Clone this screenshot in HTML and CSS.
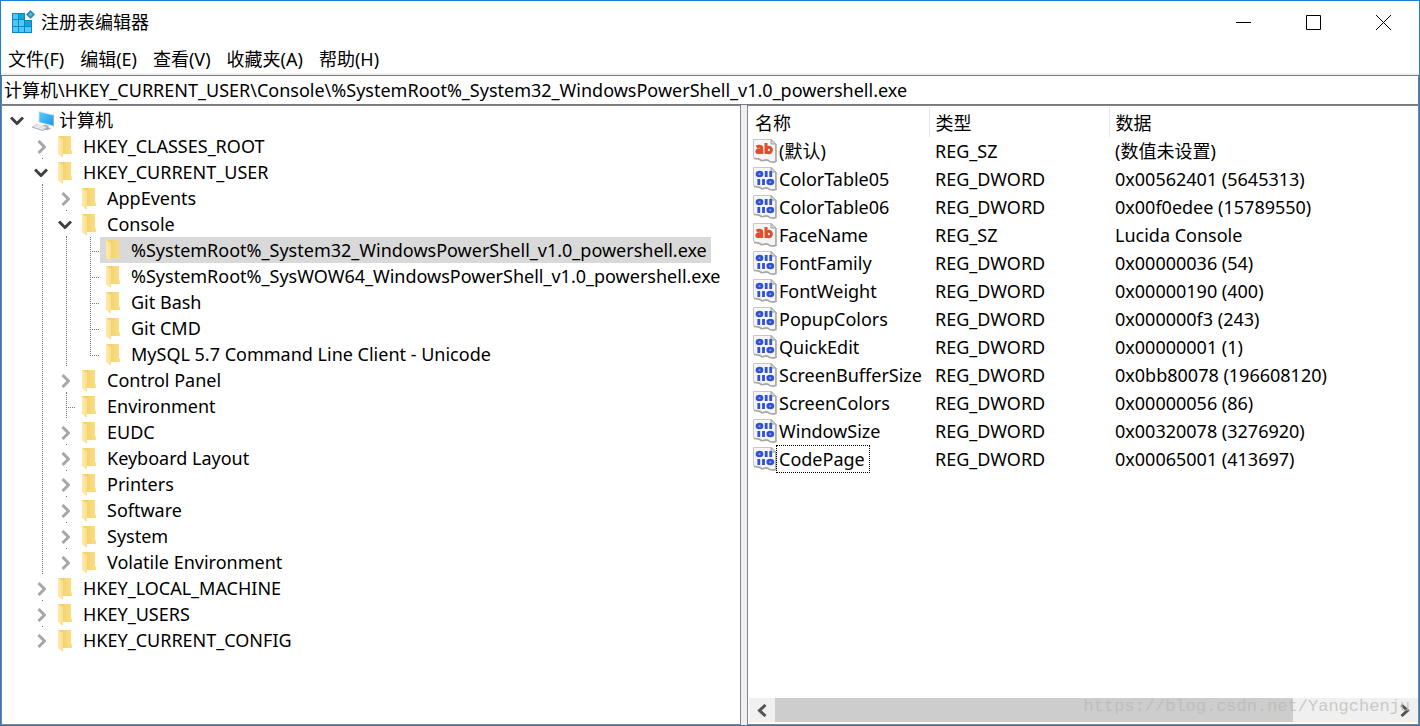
FILE: index.html
```html
<!DOCTYPE html>
<html lang="zh-CN">
<head>
<meta charset="utf-8">
<title>注册表编辑器</title>
<link rel="stylesheet" href="styles.css">
</head>
<body>
<svg class="defs" aria-hidden="true">
  <defs>
    <linearGradient id="foldBack" x1="0" x2="1"><stop offset="0" stop-color="#f1cb62"/><stop offset="1" stop-color="#fadf86"/></linearGradient>
    <linearGradient id="foldFront" x1="0" x2="1"><stop offset="0" stop-color="#ffe9a8"/><stop offset="1" stop-color="#fbe092"/></linearGradient>
    <linearGradient id="screen" x1="0" y1="0" x2="1" y2="1"><stop offset="0" stop-color="#62c8fb"/><stop offset="1" stop-color="#159af0"/></linearGradient>
  </defs>
  <symbol id="folder" viewBox="0 0 15 22">
    <path d="M0 0h13v14l1 1v3H4z" fill="url(#foldBack)"/>
    <path d="M0 0l5 3v18l-1 .5-4-3.500z" fill="url(#foldFront)"/>
  </symbol>
  <symbol id="open" viewBox="0 0 14 9"><path d="M1 1.500l6 6 6-6" fill="none" stroke="#404040" stroke-width="3"/></symbol>
  <symbol id="closed" viewBox="0 0 9 14"><path d="M1.500 1l6 6-6 6" fill="none" stroke="#a6a6a6" stroke-width="3"/></symbol>
  <symbol id="page" viewBox="0 0 24 24">
    <path d="M.5.5h18l4 4v18c-3 1-4 1-6-1-3-2-4 1-7 0-2-2-4-2-6-2l-3-1z" fill="#f6f6f6" stroke="#c8c8c8"/>
    <path d="M1 19.500c3 0 5 0 7 2 3 1 4-2 7 0 2 2 4 2 8 1V5" fill="none" stroke="#a6a6a6" stroke-width="1.500"/>
    <path d="M18 .5v4.500h4.500z" fill="#ddd" stroke="#a0a0a0"/>
  </symbol>
  <symbol id="string" viewBox="0 0 24 24">
    <use href="#page"/>
    <g fill="none" stroke="#dc4f2e" stroke-width="3">
      <path d="M3.500 8c2-1.300 5.300-1.200 5.300 1.200V15M8.800 10.500c-3 0-5 .3-5 1.900 0 2 4 1.500 5-.8"/>
      <path d="M13 4v11"/><ellipse cx="15.800" cy="11" rx="2.600" ry="2.700"/>
    </g>
  </symbol>
  <symbol id="binary" viewBox="0 0 24 24">
    <use href="#page"/>
    <g fill="none" stroke="#3152d4" stroke-width="2.800">
      <ellipse cx="6.500" cy="7" rx="2.500" ry="1.900"/><path d="M13.200 4v6M17.700 4v6M5.800 12v6M10.500 12v6"/>
      <ellipse cx="17.300" cy="15" rx="2.500" ry="1.900"/>
    </g>
  </symbol>
</svg>

<div class="window">
  <header class="titlebar">
    <svg class="app-icon" viewBox="0 0 24 24" aria-hidden="true">
      <path d="M1 3h13v7h7v13H1z" fill="#0b86be"/>
      <path d="M2 4h5v5H2zM2 10h5v6H2zM8 10h5v6H8zM2 17h5v5H2zM8 17h5v5H8zM14 17h6v5h-6z" fill="#4cc9f8"/>
      <path d="M8 4h5v5H8zM14 11h6v5h-6z" fill="#10a5dc"/>
      <path d="M19.500 0l4.500 4.500L19.500 9 15 4.500z" fill="#2b8dbf"/><path d="M19.500 2.500l2 2-2 2-2-2z" fill="#6bb8da"/>
    </svg>
    <h1 class="title">注册表编辑器</h1>
    <div class="controls">
      <button class="control" aria-label="最小化"><svg viewBox="0 0 15 15"><path d="M0 7.500h15"/></svg></button>
      <button class="control" aria-label="最大化"><svg viewBox="0 0 15 15"><path d="M.5.5h14v14H.5z"/></svg></button>
      <button class="control" aria-label="关闭"><svg viewBox="0 0 15 15"><path d="M0 0l15 15M15 0L0 15"/></svg></button>
    </div>
  </header>

  <nav class="menu">
    <button>文件(F)</button><button>编辑(E)</button><button>查看(V)</button><button>收藏夹(A)</button><button>帮助(H)</button>
  </nav>

  <input class="address" aria-label="地址" value="计算机\HKEY_CURRENT_USER\Console\%SystemRoot%_System32_WindowsPowerShell_v1.0_powershell.exe">

  <main class="panes">
    <section class="tree-pane">
      <ul class="tree">
        <li>
          <div class="row"><button class="toggle root" aria-label="折叠"><svg class="down"><use href="#open"/></svg></button>
            <span class="item"><span class="slot machine"><svg class="computer" viewBox="0 0 24 22" aria-hidden="true">
              <path d="M7 0l17 4v13L7 13z" fill="#dfe6ea"/><path d="M8 1.300l15 3.700v11L8 12z" fill="url(#screen)"/>
              <path d="M23 4l1 .5V17l-1 .3zM13 15l5 1v2l3 1-4 2-7-2z" fill="#a4adb2"/>
              <path d="M0 17l5-3 12 3.500-5 3.500z" fill="#d4d9dc"/><path d="M2 17l10 3M4 15.700l10 3M5 19l5-4" stroke="#f5f7f8" stroke-width=".8"/><path d="M0 17l12 4 5-3.500v1L12 22 0 18z" fill="#9aa3a7"/>
            </svg></span>计算机</span></div>
          <ul>
            <li><div class="row"><button class="toggle" aria-label="展开"><svg class="right"><use href="#closed"/></svg></button><span class="item"><span class="slot"><svg class="folder"><use href="#folder"/></svg></span>HKEY_CLASSES_ROOT</span></div></li>
            <li><div class="row"><button class="toggle" aria-label="折叠"><svg class="down"><use href="#open"/></svg></button><span class="item"><span class="slot"><svg class="folder"><use href="#folder"/></svg></span>HKEY_CURRENT_USER</span></div>
              <ul class="guide">
                <li><div class="row"><button class="toggle" aria-label="展开"><svg class="right"><use href="#closed"/></svg></button><span class="item"><span class="slot"><svg class="folder"><use href="#folder"/></svg></span>AppEvents</span></div></li>
                <li><div class="row"><button class="toggle" aria-label="折叠"><svg class="down"><use href="#open"/></svg></button><span class="item"><span class="slot"><svg class="folder"><use href="#folder"/></svg></span>Console</span></div>
                  <ul class="guide">
                    <li><div class="row"><span class="branch"></span><span class="item selected"><span class="slot"><svg class="folder"><use href="#folder"/></svg></span>%SystemRoot%_System32_WindowsPowerShell_v1.0_powershell.exe</span></div></li>
                    <li><div class="row"><span class="branch"></span><span class="item"><span class="slot"><svg class="folder"><use href="#folder"/></svg></span>%SystemRoot%_SysWOW64_WindowsPowerShell_v1.0_powershell.exe</span></div></li>
                    <li><div class="row"><span class="branch"></span><span class="item"><span class="slot"><svg class="folder"><use href="#folder"/></svg></span>Git Bash</span></div></li>
                    <li><div class="row"><span class="branch"></span><span class="item"><span class="slot"><svg class="folder"><use href="#folder"/></svg></span>Git CMD</span></div></li>
                    <li><div class="row"><span class="branch last"></span><span class="item"><span class="slot"><svg class="folder"><use href="#folder"/></svg></span>MySQL 5.7 Command Line Client - Unicode</span></div></li>
                  </ul>
                </li>
                <li><div class="row"><button class="toggle" aria-label="展开"><svg class="right"><use href="#closed"/></svg></button><span class="item"><span class="slot"><svg class="folder"><use href="#folder"/></svg></span>Control Panel</span></div></li>
                <li><div class="row"><span class="branch"></span><span class="item"><span class="slot"><svg class="folder"><use href="#folder"/></svg></span>Environment</span></div></li>
                <li><div class="row"><button class="toggle" aria-label="展开"><svg class="right"><use href="#closed"/></svg></button><span class="item"><span class="slot"><svg class="folder"><use href="#folder"/></svg></span>EUDC</span></div></li>
                <li><div class="row"><button class="toggle" aria-label="展开"><svg class="right"><use href="#closed"/></svg></button><span class="item"><span class="slot"><svg class="folder"><use href="#folder"/></svg></span>Keyboard Layout</span></div></li>
                <li><div class="row"><button class="toggle" aria-label="展开"><svg class="right"><use href="#closed"/></svg></button><span class="item"><span class="slot"><svg class="folder"><use href="#folder"/></svg></span>Printers</span></div></li>
                <li><div class="row"><button class="toggle" aria-label="展开"><svg class="right"><use href="#closed"/></svg></button><span class="item"><span class="slot"><svg class="folder"><use href="#folder"/></svg></span>Software</span></div></li>
                <li><div class="row"><button class="toggle" aria-label="展开"><svg class="right"><use href="#closed"/></svg></button><span class="item"><span class="slot"><svg class="folder"><use href="#folder"/></svg></span>System</span></div></li>
                <li><div class="row"><button class="toggle end" aria-label="展开"><svg class="right"><use href="#closed"/></svg></button><span class="item"><span class="slot"><svg class="folder"><use href="#folder"/></svg></span>Volatile Environment</span></div></li>
              </ul>
            </li>
            <li><div class="row"><button class="toggle" aria-label="展开"><svg class="right"><use href="#closed"/></svg></button><span class="item"><span class="slot"><svg class="folder"><use href="#folder"/></svg></span>HKEY_LOCAL_MACHINE</span></div></li>
            <li><div class="row"><button class="toggle" aria-label="展开"><svg class="right"><use href="#closed"/></svg></button><span class="item"><span class="slot"><svg class="folder"><use href="#folder"/></svg></span>HKEY_USERS</span></div></li>
            <li><div class="row"><button class="toggle end" aria-label="展开"><svg class="right"><use href="#closed"/></svg></button><span class="item"><span class="slot"><svg class="folder"><use href="#folder"/></svg></span>HKEY_CURRENT_CONFIG</span></div></li>
          </ul>
        </li>
      </ul>
    </section>

    <section class="values-pane">
      <table class="values">
        <colgroup><col class="col-name"><col class="col-type"><col></colgroup>
        <thead><tr><th>名称</th><th>类型</th><th>数据</th></tr></thead>
        <tbody>
          <tr><td><div class="name"><svg><use href="#string"/></svg><span>(默认)</span></div></td><td>REG_SZ</td><td>(数值未设置)</td></tr>
          <tr><td><div class="name"><svg><use href="#binary"/></svg><span>ColorTable05</span></div></td><td>REG_DWORD</td><td>0x00562401 (5645313)</td></tr>
          <tr><td><div class="name"><svg><use href="#binary"/></svg><span>ColorTable06</span></div></td><td>REG_DWORD</td><td>0x00f0edee (15789550)</td></tr>
          <tr><td><div class="name"><svg><use href="#string"/></svg><span>FaceName</span></div></td><td>REG_SZ</td><td>Lucida Console</td></tr>
          <tr><td><div class="name"><svg><use href="#binary"/></svg><span>FontFamily</span></div></td><td>REG_DWORD</td><td>0x00000036 (54)</td></tr>
          <tr><td><div class="name"><svg><use href="#binary"/></svg><span>FontWeight</span></div></td><td>REG_DWORD</td><td>0x00000190 (400)</td></tr>
          <tr><td><div class="name"><svg><use href="#binary"/></svg><span>PopupColors</span></div></td><td>REG_DWORD</td><td>0x000000f3 (243)</td></tr>
          <tr><td><div class="name"><svg><use href="#binary"/></svg><span>QuickEdit</span></div></td><td>REG_DWORD</td><td>0x00000001 (1)</td></tr>
          <tr><td><div class="name"><svg><use href="#binary"/></svg><span>ScreenBufferSize</span></div></td><td>REG_DWORD</td><td>0x0bb80078 (196608120)</td></tr>
          <tr><td><div class="name"><svg><use href="#binary"/></svg><span>ScreenColors</span></div></td><td>REG_DWORD</td><td>0x00000056 (86)</td></tr>
          <tr><td><div class="name"><svg><use href="#binary"/></svg><span>WindowSize</span></div></td><td>REG_DWORD</td><td>0x00320078 (3276920)</td></tr>
          <tr><td><div class="name"><svg><use href="#binary"/></svg><span class="focused">CodePage</span></div></td><td>REG_DWORD</td><td>0x00065001 (413697)</td></tr>
        </tbody>
      </table>
      <div class="scrollbar">
        <button class="arrow" aria-label="向左滚动"><svg viewBox="0 0 10 13"><path d="M8.500 1l-6 5.500 6 5.500"/></svg></button>
        <div class="track"><div class="thumb"></div></div>
        <button class="arrow" aria-label="向右滚动"><svg viewBox="0 0 10 13"><path d="M1.500 1l6 5.500-6 5.500"/></svg></button>
      </div>
      <span class="watermark">https://blog.csdn.net/Yangchenju</span>
    </section>
  </main>
</div>
</body>
</html>
```

FILE: styles.css
```css
* { box-sizing: border-box; }

body {
  margin: 0;
  background: #fff;
  color: #000;
  font: 18px/26px "Noto Sans", "Noto Sans CJK SC", sans-serif;
}

button {
  padding: 0;
  border: 0;
  background: none;
  color: inherit;
  font: inherit;
}

svg { display: block; flex: none; }
.defs { position: absolute; width: 0; height: 0; }

.window {
  display: flex;
  flex-direction: column;
  height: 100vh;
  border: 1px solid #1a7fd4;
}

/* Title bar and menu */
.titlebar {
  display: flex;
  align-items: center;
  height: 44px;
  padding: 0 1px 2px 10px;
}
.app-icon { width: 24px; height: 24px; }
.title {
  flex: 1;
  margin: 0 0 0 6px;
  font-size: 18px;
  font-weight: 400;
}
.controls { display: flex; }
.control {
  display: grid;
  place-items: center;
  width: 70px;
  height: 42px;
}
.control svg {
  width: 15px;
  height: 15px;
  fill: none;
  stroke: #000;
}

.menu {
  display: flex;
  gap: 16px;
  height: 30px;
  padding-left: 7px;
  border-bottom: 2px solid #f0f0f0;
}

.address {
  width: 100%;
  height: 30px;
  padding: 0 2px 2px;
  border: 1px solid #7a7a7e;
  outline: 0;
  background: #fff;
  color: #000;
  font: inherit;
}

/* Split view */
.panes {
  display: grid;
  grid-template-columns: minmax(0, 740fr) minmax(0, 672fr);
  gap: 6px;
  flex: 1;
  min-height: 0;
  background: #f0f0f0;
}
.tree-pane, .values-pane {
  border: 1px solid #82858f;
  background: #fff;
  overflow: hidden;
}

/* Key tree */
.tree, .tree ul { margin: 0; padding: 0; list-style: none; }
.tree { padding: 1px 0 0 4px; }
.tree ul { padding-left: 24px; }
.guide {
  background: repeating-linear-gradient(#777 0 1px, transparent 1px 2px) 12px 0 / 1px 100% no-repeat;
}
.row { display: flex; height: 26px; white-space: nowrap; }
.toggle {
  display: grid;
  place-items: center;
  width: 22px;
  padding-top: 1px;
  background: linear-gradient(#777, #777) 12px 100% / 1px 1px no-repeat;
}
.toggle.end { background: #fff; }
.toggle.root { background: none; }
.down { width: 14px; height: 9px; }
.right { width: 9px; height: 14px; }
.branch {
  width: 22px;
  background:
    repeating-linear-gradient(#777 0 1px, transparent 1px 2px) 12px 0 / 1px 100% no-repeat,
    repeating-linear-gradient(90deg, #777 0 1px, transparent 1px 2px) 12px 14px / 10px 1px no-repeat;
}
.branch.last {
  background:
    repeating-linear-gradient(#777 0 1px, transparent 1px 2px) 12px 0 / 1px 15px no-repeat,
    repeating-linear-gradient(90deg, #777 0 1px, transparent 1px 2px) 12px 14px / 10px 1px no-repeat;
}
.item { display: flex; padding-right: 4px; }
.selected { background: #d9d9d9; }
.slot {
  display: grid;
  place-items: center start;
  width: 31px;
  padding: 2px 0 0 6px;
}
.slot.machine { padding-left: 4px; }
.folder { width: 15px; height: 22px; }
.computer { width: 22px; height: 22px; }

/* Values */
.values-pane {
  position: relative;
  display: flex;
  flex-direction: column;
  padding: 1px 0 2px 1px;
}
.values {
  width: 100%;
  table-layout: fixed;
  border-collapse: collapse;
  white-space: nowrap;
}
.col-name, .col-type { width: 180px; }
.values th {
  height: 30px;
  padding: 1px 6px 0;
  border-right: 1px solid #e5e5e5;
  font-weight: 400;
  text-align: left;
}
.values th:last-child { border-right: 0; }
.values td { height: 28px; padding: 0 6px; }
.values td:first-child { padding: 0 0 0 4px; }
.name { display: flex; align-items: center; height: 28px; }
.name svg { width: 24px; height: 24px; }
.name span { padding: 0 4px 0 2px; }
.name .focused { outline: 1px dotted #000; }

.scrollbar {
  display: flex;
  height: 24px;
  margin-top: auto;
  background: #f0f0f0;
}
.arrow { display: grid; place-items: center; width: 26px; }
.arrow svg {
  width: 10px;
  height: 13px;
  fill: none;
  stroke: #555;
  stroke-width: 3;
}
.track { flex: 1; }
.thumb { width: 84%; height: 100%; background: #cdcdcd; }
.watermark {
  position: absolute;
  right: 8px;
  bottom: 4px;
  color: #b9b9b4;
  font: 17px/26px "Liberation Mono", monospace;
  opacity: .7;
}
```
